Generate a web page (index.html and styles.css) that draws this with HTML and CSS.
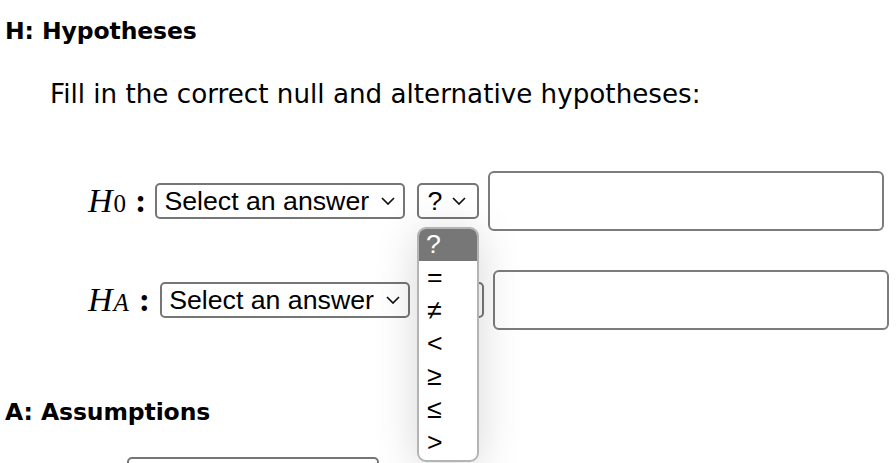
FILE: index.html
```html
<!DOCTYPE html>
<html>
<head>
<meta charset="utf-8">
<link rel="stylesheet" href="styles.css">
</head>
<body>
<h3 class="section-title">H: Hypotheses</h3>
<p class="instr">Fill in the correct null and alternative hypotheses:</p>

<div class="hyp-row row-null">
  <span class="math"><i>H</i><sub>0</sub><span class="colon">:</span></span>
  <span class="sel sel-wide"><span class="sel-text">Select an answer</span><svg class="chev" viewBox="0 0 14 8"><path d="M1 1 L7 7 L13 1" fill="none" stroke="#111" stroke-width="1.7"/></svg></span>
  <span class="sel sel-rel"><span class="sel-text">?</span><svg class="chev" viewBox="0 0 14 8"><path d="M1 1 L7 7 L13 1" fill="none" stroke="#111" stroke-width="1.7"/></svg></span>
  <span class="field"></span>
</div>

<div class="hyp-row row-alt">
  <span class="math"><i>H</i><sub><i>A</i></sub><span class="colon">:</span></span>
  <span class="sel sel-wide"><span class="sel-text">Select an answer</span><svg class="chev" viewBox="0 0 14 8"><path d="M1 1 L7 7 L13 1" fill="none" stroke="#111" stroke-width="1.7"/></svg></span>
  <span class="sel sel-rel"><span class="sel-text">?</span><svg class="chev" viewBox="0 0 14 8"><path d="M1 1 L7 7 L13 1" fill="none" stroke="#111" stroke-width="1.7"/></svg></span>
  <span class="field"></span>
</div>

<h3 class="section-title assume">A: Assumptions</h3>
<div class="assume-row"><span class="sel sel-assume"></span></div>

<ul class="popup">
  <li class="opt selected">?</li>
  <li class="opt">=</li>
  <li class="opt">≠</li>
  <li class="opt">&lt;</li>
  <li class="opt">≥</li>
  <li class="opt">≤</li>
  <li class="opt">&gt;</li>
</ul>
</body>
</html>
```

FILE: styles.css
```css
html, body {
  margin: 0;
  padding: 0;
  background: #fff;
  overflow: hidden;
}
body {
  width: 896px;
  height: 463px;
  position: relative;
  color: #000;
  font-family: "DejaVu Sans", Verdana, sans-serif;
}
.section-title {
  margin: 16px 0 0 5px;
  font-size: 23.5px;
  line-height: 30px;
  font-weight: bold;
  letter-spacing: -0.1px;
}
.instr {
  margin: 33px 0 0 50px;
  font-size: 26.2px;
  line-height: 30px;
}
.hyp-row {
  display: flex;
  align-items: center;
  padding-left: 88px;
  height: 60px;
}
.row-null { margin-top: 62px; }
.row-alt { margin-top: 39px; }
.math {
  font-family: "Liberation Serif", "Times New Roman", serif;
  font-size: 34px;
  display: inline-flex;
  align-items: baseline;
  line-height: 36px;
}
.math i { font-style: italic; letter-spacing: 1px; }
.math sub {
  font-size: 25px;
  vertical-align: -7px;
  line-height: 1;
  margin-left: 0;
}
.colon {
  margin: 0 9px 0 9px;
  font-weight: bold;
}
.row-alt .sel-wide { margin-left: 1px; }
.sel {
  box-sizing: border-box;
  display: inline-flex;
  align-items: center;
  height: 36px;
  border: 2px solid #767676;
  border-radius: 5px;
  font-family: "Liberation Sans", Arial, sans-serif;
  font-size: 26.7px;
  background: #fff;
}
.sel-wide {
  width: 250px;
  padding: 0 8px 0 7px;
  justify-content: space-between;
}
.sel-rel {
  width: 62px;
  padding: 0 11px 0 8px;
  margin-left: 12px;
  justify-content: space-between;
}
.chev {
  width: 14px;
  height: 8px;
}
.field {
  box-sizing: border-box;
  width: 396px;
  height: 60px;
  margin-left: 9px;
  border: 2px solid #7c7c7c;
  border-radius: 6px;
}
.assume {
  margin-top: 67px;
}
.assume-row {
  padding-left: 127px;
  margin-top: 30px;
}
.sel-assume {
  width: 252px;
  height: 40px;
}
.popup {
  position: absolute;
  left: 417px;
  top: 227px;
  width: 62px;
  height: 235px;
  box-sizing: border-box;
  margin: 0;
  padding: 0;
  list-style: none;
  border: 2px solid #b4b4b4;
  border-radius: 9px;
  background: #fff;
  overflow: hidden;
  box-shadow: 0 6px 44px rgba(0, 0, 0, 0.16);
  font-family: "Liberation Sans", Arial, sans-serif;
  font-size: 26.7px;
}
.opt {
  height: 33px;
  line-height: 33px;
  padding-left: 8px;
}
.opt.selected {
  background: #777;
  color: #fff;
  height: 32px;
  line-height: 30px;
  padding-left: 7px;
}
```
